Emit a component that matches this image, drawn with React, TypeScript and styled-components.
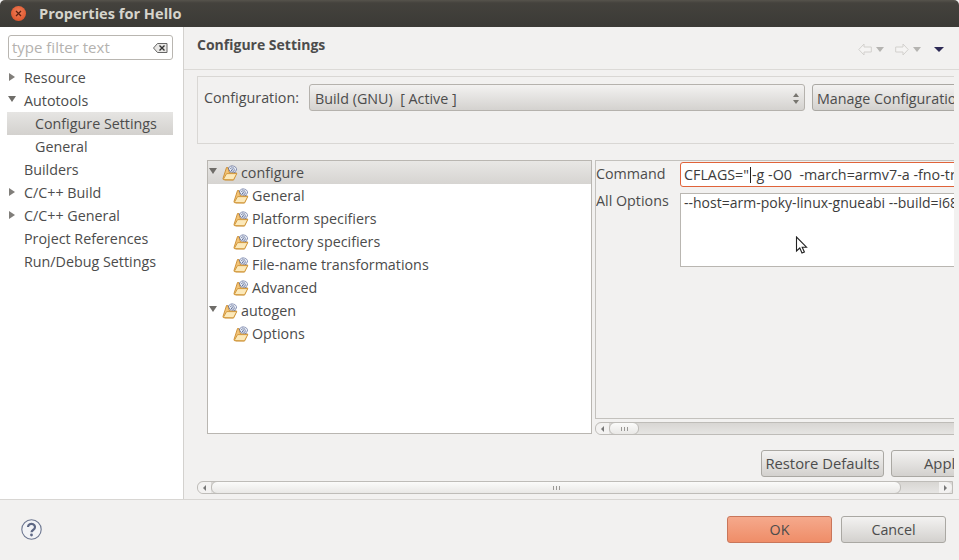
import React from "react";
import styled, { createGlobalStyle } from "styled-components";

const font = `"Open Sans", "Noto Sans", "Liberation Sans", sans-serif`;

const Global = createGlobalStyle`
  html, body { margin: 0; padding: 0; background: #f2f1f0; }
  * { box-sizing: border-box; }
`;

const Win = styled.div`
  position: relative;
  width: 959px;
  height: 560px;
  overflow: hidden;
  display: flex;
  flex-direction: column;
  background: #f2f1f0;
  font: 14.3px/23px ${font};
  color: #4c4c4c;
`;
const TitleBar = styled.div`
  height: 27px;
  flex: none;
  display: flex;
  align-items: center;
  padding-left: 11px;
  gap: 13px;
  background: linear-gradient(#56534c 0, #44423d 3px, #3b3a36 100%);
  border-radius: 5px 5px 0 0;
`;
const CloseBtn = styled.div`
  width: 15px;
  height: 15px;
  border-radius: 50%;
  background: radial-gradient(circle at 50% 40%, #f0805a, #d8491f);
  display: flex;
  align-items: center;
  justify-content: center;
`;
const Title = styled.div`
  font-weight: 700;
  font-size: 14.6px;
  color: #d6d4cc;
`;
const Body = styled.div`
  flex: 1;
  min-height: 0;
  display: flex;
  border-bottom: 1px solid #d8d6d3;
`;
const Sidebar = styled.div`
  width: 184px;
  flex: none;
  background: #fff;
  border-right: 1px solid #d3d1ce;
  padding: 8px 10px 0 7px;
`;
const Filter = styled.div`
  height: 25px;
  width: 165px;
  margin-bottom: 6px;
  margin-left: 1px;
  border: 1px solid #b9b6b1;
  border-radius: 3px;
  display: flex;
  align-items: center;
  justify-content: space-between;
  padding: 0 4px 0 3px;
  color: #b4b2af;
  font-size: 15px;
`;
const SideRow = styled.div<{ $depth: number; $selected?: boolean }>`
  height: 23px;
  width: 166px;
  display: flex;
  align-items: center;
  position: relative;
  padding-left: ${(p) => (p.$depth === 2 ? 28 : 17)}px;
  white-space: nowrap;
  background: ${(p) => (p.$selected ? "linear-gradient(#e6e5e3, #d3d1ce)" : "transparent")};
`;
const Arrow = styled.span<{ $open: boolean }>`
  position: absolute;
  left: ${(p) => (p.$open ? 1 : 2)}px;
  top: 7px;
  width: 0;
  height: 0;
  ${(p) =>
    p.$open
      ? "border-left: 4px solid transparent; border-right: 4px solid transparent; border-top: 6px solid #6f6d69;"
      : "border-top: 4px solid transparent; border-bottom: 4px solid transparent; border-left: 6px solid #807e7a;"}
`;
const Main = styled.div`
  flex: 1;
  min-width: 0;
  display: flex;
  flex-direction: column;
`;
const MainHead = styled.div`
  height: 43px;
  flex: none;
  border-bottom: 1px solid #dcdad7;
  padding: 0 15px 0 13px;
  display: flex;
  align-items: center;
  justify-content: space-between;
`;
const HeadTitle = styled.div`
  font-weight: 700;
  font-size: 14px;
  padding-bottom: 7px;
`;
const NavIcons = styled.div`
  display: flex;
  align-items: center;
  padding-top: 3px;
`;
const NavArrow = styled.svg<{ $flip?: boolean }>`
  margin-right: 4px;
  margin-left: ${(p) => (p.$flip ? 11 : 0)}px;
  transform: ${(p) => (p.$flip ? "scaleX(-1)" : "none")};
`;
const MenuTri = styled.span<{ $dark?: boolean }>`
  width: 0;
  height: 0;
  border-left: ${(p) => (p.$dark ? 5 : 4)}px solid transparent;
  border-right: ${(p) => (p.$dark ? 5 : 4)}px solid transparent;
  border-top: 5px solid ${(p) => (p.$dark ? "#2d2a55" : "#b5b4b1")};
  margin-left: ${(p) => (p.$dark ? 13 : 0)}px;
`;
const Content = styled.div`
  flex: none;
  width: 770px;
  height: 428px;
  padding: 6px 0 0 13px;
  display: flex;
  flex-direction: column;
  overflow: hidden;
`;
const Group = styled.div`
  height: 68px;
  flex: none;
  width: 770px;
  border: 1px solid #d9d7d4;
  border-right: none;
  padding: 7px 0 0 6px;
  display: flex;
  align-items: flex-start;
  overflow: hidden;
`;
const GLabel = styled.div`
  width: 105px;
  flex: none;
  height: 27px;
  line-height: 28px;
  white-space: nowrap;
`;
const Combo = styled.div`
  width: 496px;
  height: 27px;
  flex: none;
  margin-right: 7px;
  border: 1px solid #b5b2ad;
  border-radius: 3px;
  background: linear-gradient(#f3f2f1, #d4d2cf);
  display: flex;
  align-items: center;
  justify-content: space-between;
  padding: 1px 5px 0;
  white-space: pre;
`;
const ComboSpin = styled.div`
  display: flex;
  flex-direction: column;
  gap: 3px;
  &::before, &::after {
    content: "";
    border-left: 3px solid transparent;
    border-right: 3px solid transparent;
  }
  &::before { border-bottom: 4px solid #77756f; }
  &::after { border-top: 4px solid #77756f; }
`;
const Btn = styled.div<{ $w: number; $primary?: boolean; $left?: boolean }>`
  width: ${(p) => p.$w}px;
  height: 27px;
  flex: none;
  border: 1px solid ${(p) => (p.$primary ? "#c9765a" : "#aaa8a3")};
  border-radius: 3px;
  background: ${(p) =>
    p.$primary ? "linear-gradient(#f5a98c, #ef8d68)" : "linear-gradient(#f3f2f1, #d3d1ce)"};
  display: flex;
  align-items: center;
  justify-content: center;
  white-space: nowrap;
  overflow: hidden;
  ${(p) => (p.$left ? "justify-content: flex-start; padding-left: 4px;" : "")}
`;
const ManageBtn = styled(Btn)`
  padding-top: 1px;
`;
const Split = styled.div`
  flex: none;
  height: 274px;
  margin: 16px 0 0 10px;
  display: flex;
  width: 752px;
`;
const Tree = styled.div`
  width: 385px;
  flex: none;
  background: #fff;
  border: 1px solid #b9b6b1;
`;
const TreeRow = styled.div<{ $depth: number; $selected?: boolean }>`
  height: 23px;
  display: flex;
  align-items: center;
  gap: 3px;
  position: relative;
  padding-left: ${(p) => (p.$depth === 1 ? 25 : 14)}px;
  white-space: nowrap;
  background: ${(p) => (p.$selected ? "linear-gradient(#e8e7e5, #d6d4d1)" : "transparent")};
`;
const Right = styled.div`
  margin-left: 3px;
  flex: 1;
  display: flex;
  flex-direction: column;
  min-width: 0;
`;
const Form = styled.div`
  height: 259px;
  flex: none;
  border: 1px solid #c3c1bd;
  border-right: none;
  padding: 1px 0 0 0;
  display: grid;
  grid-template-columns: 84px 400px;
  grid-template-rows: 25px 74px;
  row-gap: 6px;
  overflow: hidden;
`;
const FieldLabel = styled.div<{ $lh: number }>`
  line-height: ${(p) => p.$lh}px;
  white-space: nowrap;
`;
const Input = styled.div`
  border: 1px solid #e0633a;
  border-radius: 3px;
  background: #fff;
  height: 25px;
  line-height: 23px;
  padding-left: 3px;
  white-space: pre;
  overflow: hidden;
  color: #3c3c3c;
`;
const Caret = styled.span`
  display: inline-block;
  width: 1px;
  height: 16px;
  background: #222;
  vertical-align: -3px;
  margin: 0 1px;
`;
const TextArea = styled.div`
  border: 1px solid #b9b6b1;
  background: #fff;
  padding: 1px 3px 0;
  font-size: 14px;
  line-height: 16px;
  white-space: pre;
  overflow: hidden;
  color: #3c3c3c;
`;
const HScroll = styled.div<{ $mt: number; $w?: number }>`
  height: 13px;
  flex: none;
  width: ${(p) => (p.$w ? `${p.$w}px` : "100%")};
  margin-top: ${(p) => p.$mt}px;
  border: 1px solid #bebcb8;
  border-radius: 6px 0 0 6px;
  background: linear-gradient(#d8d6d3, #e6e5e3);
  display: flex;
  align-items: stretch;
`;
const ScrollEnd = styled.div<{ $dir: "l" | "r" }>`
  width: 13px;
  flex: none;
  display: flex;
  align-items: center;
  justify-content: center;
  background: #f3f2f1;
  border-radius: ${(p) => (p.$dir === "l" ? "6px 0 0 6px" : "0 6px 6px 0")};
  &::before {
    content: "";
    border-top: 3px solid transparent;
    border-bottom: 3px solid transparent;
    ${(p) =>
      p.$dir === "l" ? "border-right: 3px solid #777;" : "border-left: 3px solid #777;"}
  }
`;
const Thumb = styled.div<{ $w: number }>`
  width: ${(p) => p.$w}px;
  flex: none;
  border: 1px solid #bebcb8;
  margin: -1px 0;
  border-radius: 6px;
  background: linear-gradient(#fbfbfa, #e9e8e6);
  display: flex;
  align-items: center;
  justify-content: center;
  &::after {
    content: "";
    width: 7px;
    height: 4px;
    background: repeating-linear-gradient(90deg, #9a9895 0 1px, transparent 1px 3px);
  }
`;
const Spacer = styled.div`
  flex: 1;
`;
const ButtonBar = styled.div`
  flex: none;
  height: 27px;
  margin-top: 16px;
  width: 762px;
  display: flex;
  gap: 7px;
  justify-content: flex-end;
  font-size: 14.8px;
`;
const ApplyText = styled.span`
  padding-left: 28px;
`;
const Footer = styled.div`
  height: 60px;
  flex: none;
  display: flex;
  align-items: center;
  justify-content: space-between;
  padding: 0 13px 2px 21px;
`;
const FooterBtns = styled.div`
  display: flex;
  gap: 9px;
`;
const CursorOverlay = styled.svg`
  position: absolute;
  left: 795px;
  top: 236px;
`;

const Folder = () => (
  <svg width="16" height="16" viewBox="0 0 16 16">
    <path d="M4.5 2.5L1 13.5l1.5 1.5h9l3.2-7H7.5L5.8 2.5z" fill="#f3c477" stroke="#c98a2e" strokeWidth="0.9" />
    <path d="M1.2 14.6L4.6 8.6h10.2l-3.3 6.2z" fill="#fce9ba" stroke="#cf9436" strokeWidth="0.9" />
    <path d="M6.5 3.5Q7.2.9 10.4.9 13.7 1.2 14.7 4L13.2 7.4 8 6.8z" fill="#e8ecf4" stroke="#44558a" strokeWidth="0.9" strokeDasharray="1.3 0.7" />
    <path d="M8.4 3.4l4.4 1.7M9 5.2l3 1M9.5 2.2l3.5 1.5" stroke="#34467a" strokeWidth="0.9" strokeDasharray="1 0.9" />
  </svg>
);

const BackIcon = ({ flip }: { flip?: boolean }) => (
  <NavArrow $flip={flip} width="14" height="13" viewBox="0 0 14 13">
    <path d="M0.8 6.5L6 1v3h7.3v5H6v3z" fill="#f5f4f3" stroke="#d2d0cd" />
  </NavArrow>
);

const ClearIcon = () => (
  <svg width="15" height="10" viewBox="0 0 15 10">
    <path d="M4.5 .5H14v9H4.5L.5 5z" fill="#e9e8e6" stroke="#666" />
    <path d="M6.5 2.5l5 5M11.5 2.5l-5 5" stroke="#333" strokeWidth="1.4" />
  </svg>
);

const HelpIcon = () => (
  <svg width="21" height="21" viewBox="0 0 21 21">
    <circle cx="10.5" cy="10.5" r="9.7" fill="#f2f3f6" stroke="#6c7690" strokeWidth="1.1" />
    <path d="M7 8a3.5 3.2 0 1 1 5.4 2.7c-1.3.9-1.9 1.3-1.9 2.6" fill="none" stroke="#5d6784" strokeWidth="2.2" />
    <circle cx="10.5" cy="16" r="1.4" fill="#5d6784" />
  </svg>
);

const sideItems = [
  { t: "Resource", d: 1, a: "c" },
  { t: "Autotools", d: 1, a: "o" },
  { t: "Configure Settings", d: 2, s: true },
  { t: "General", d: 2 },
  { t: "Builders", d: 1 },
  { t: "C/C++ Build", d: 1, a: "c" },
  { t: "C/C++ General", d: 1, a: "c" },
  { t: "Project References", d: 1 },
  { t: "Run/Debug Settings", d: 1 },
];
const treeItems = [
  { t: "configure", d: 0, s: true },
  { t: "General", d: 1 },
  { t: "Platform specifiers", d: 1 },
  { t: "Directory specifiers", d: 1 },
  { t: "File-name transformations", d: 1 },
  { t: "Advanced", d: 1 },
  { t: "autogen", d: 0 },
  { t: "Options", d: 1 },
];

export default function App() {
  return (
    <Win>
      <Global />
      <TitleBar>
        <CloseBtn>
          <svg width="7" height="7" viewBox="0 0 7 7">
            <path d="M1 1l5 5M6 1l-5 5" stroke="#5c2110" strokeWidth="1.3" />
          </svg>
        </CloseBtn>
        <Title>Properties for Hello</Title>
      </TitleBar>
      <Body>
        <Sidebar>
          <Filter>
            <span>type filter text</span>
            <ClearIcon />
          </Filter>
          {sideItems.map((i) => (
            <SideRow key={i.t} $depth={i.d} $selected={i.s}>
              {i.a && <Arrow $open={i.a === "o"} />}
              {i.t}
            </SideRow>
          ))}
        </Sidebar>
        <Main>
          <MainHead>
            <HeadTitle>Configure Settings</HeadTitle>
            <NavIcons>
              <BackIcon />
              <MenuTri />
              <BackIcon flip />
              <MenuTri />
              <MenuTri $dark />
            </NavIcons>
          </MainHead>
          <Content>
            <Group>
              <GLabel>Configuration:</GLabel>
              <Combo>
                <span>Build (GNU)  [ Active ]</span>
                <ComboSpin />
              </Combo>
              <ManageBtn $w={160} $left>Manage Configurations...</ManageBtn>
            </Group>
            <Split>
              <Tree>
                {treeItems.map((i, n) => (
                  <TreeRow key={n} $depth={i.d} $selected={i.s}>
                    {i.d === 0 && <Arrow $open />}
                    <Folder />
                    {i.t}
                  </TreeRow>
                ))}
              </Tree>
              <Right>
                <Form>
                  <FieldLabel $lh={24}>Command</FieldLabel>
                  <Input>
                    CFLAGS="<Caret />-g -O0  -march=armv7-a -fno-tree-vectorize
                  </Input>
                  <FieldLabel $lh={16}>All Options</FieldLabel>
                  <TextArea>--host=arm-poky-linux-gnueabi --build=i686-linux</TextArea>
                </Form>
                <HScroll $mt={3}>
                  <ScrollEnd $dir="l" />
                  <Thumb $w={30} />
                </HScroll>
              </Right>
            </Split>
            <ButtonBar>
              <Btn $w={123}>Restore Defaults</Btn>
              <Btn $w={68} $left><ApplyText>Apply</ApplyText></Btn>
            </ButtonBar>
            <HScroll $mt={4} $w={756}>
              <ScrollEnd $dir="l" />
              <Thumb $w={690} />
              <Spacer />
              <ScrollEnd $dir="r" />
            </HScroll>
          </Content>
        </Main>
      </Body>
      <Footer>
        <HelpIcon />
        <FooterBtns>
          <Btn $w={105} $primary>OK</Btn>
          <Btn $w={105}>Cancel</Btn>
        </FooterBtns>
      </Footer>
      <CursorOverlay width="14" height="20" viewBox="0 0 14 20">
        <path d="M1.5 1v14l3.3-3 2.2 5 2.4-1-2.2-4.8h4.3z" fill="#fff" stroke="#222" strokeWidth="1.1" />
      </CursorOverlay>
    </Win>
  );
}
